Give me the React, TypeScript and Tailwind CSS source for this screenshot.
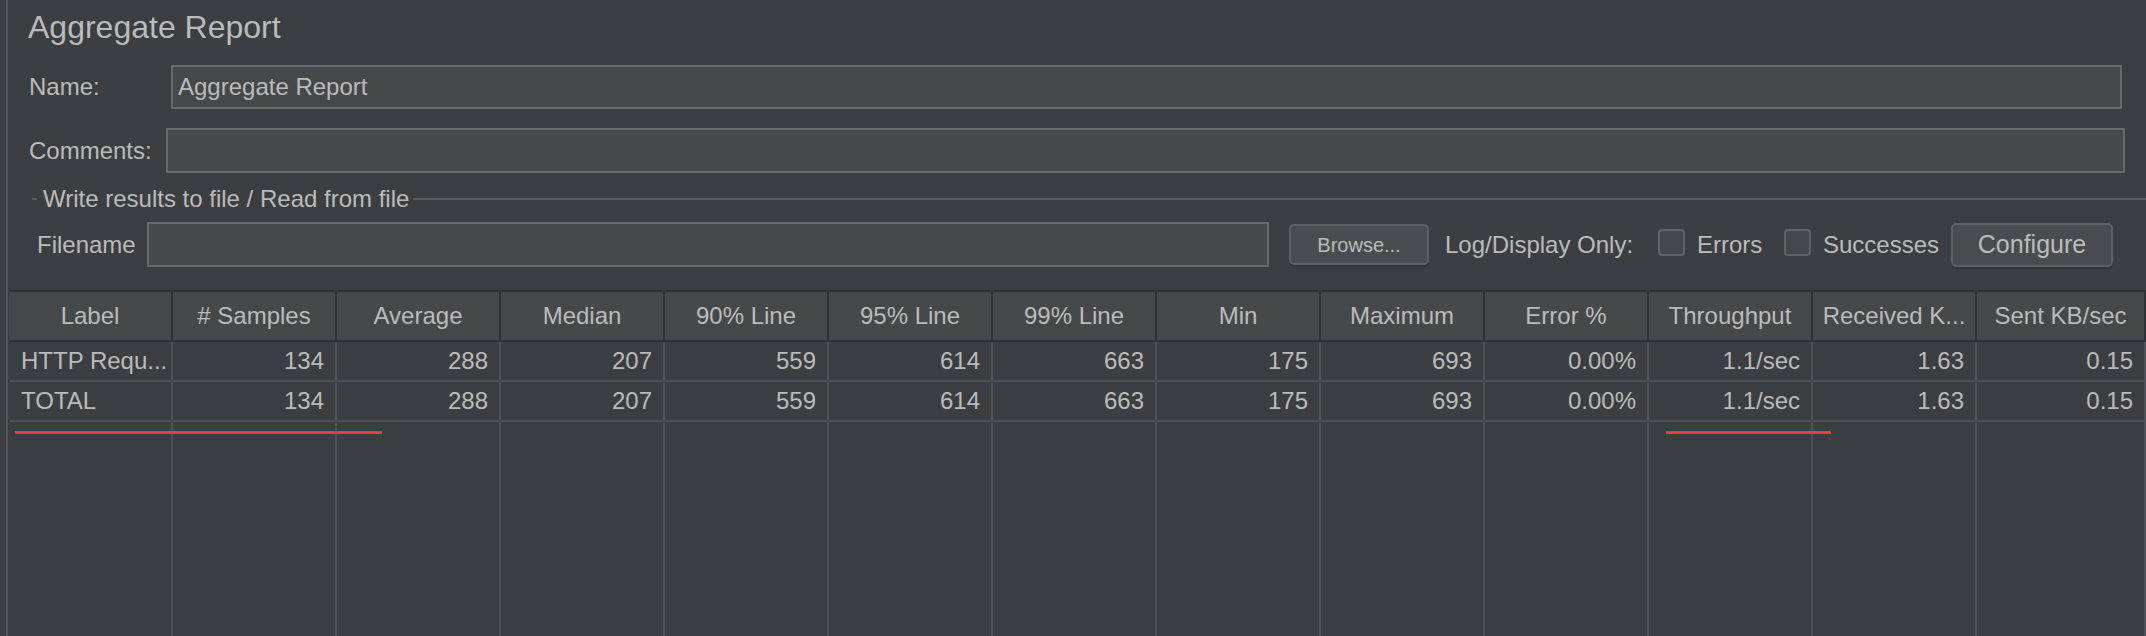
import React from "react";

const columns = [
  "Label",
  "# Samples",
  "Average",
  "Median",
  "90% Line",
  "95% Line",
  "99% Line",
  "Min",
  "Maximum",
  "Error %",
  "Throughput",
  "Received K...",
  "Sent KB/sec",
];

const rows = [
  ["HTTP Requ...", "134", "288", "207", "559", "614", "663", "175", "693", "0.00%", "1.1/sec", "1.63", "0.15"],
  ["TOTAL", "134", "288", "207", "559", "614", "663", "175", "693", "0.00%", "1.1/sec", "1.63", "0.15"],
];

const gridCols = "grid grid-cols-[repeat(12,164px)_1fr]";

function Checkbox() {
  return <div className="h-[27px] w-[27px] shrink-0 rounded-[4px] border-2 border-[#5f6365] bg-[#43494a]" />;
}

export default function App() {
  return (
    <div className="relative h-[636px] w-[2146px] overflow-hidden bg-[#3c3f41] font-['Liberation_Sans',Arial,sans-serif] text-[24px] text-[#bbbbbb]">
      <div className="ml-[6px] flex h-full flex-col border-l-2 border-[#535557]">
        {/* title */}
        <div className="mt-[11px] pl-[20px] text-[32px] leading-[32px]">Aggregate Report</div>

        {/* name */}
        <div className="mt-[22px] flex items-center pl-[21px] pr-[24px]">
          <div className="w-[142px] shrink-0">Name:</div>
          <div className="flex h-[44px] flex-1 items-center border-2 border-[#67696b] bg-[#45494a] pl-[5px]">
            Aggregate Report
          </div>
        </div>

        {/* comments */}
        <div className="mt-[19px] flex items-center pl-[21px] pr-[21px]">
          <div className="w-[137px] shrink-0">Comments:</div>
          <div className="h-[45px] flex-1 border-2 border-[#67696b] bg-[#45494a]" />
        </div>

        {/* titled border */}
        <div className="mt-[13px] flex h-[26px] items-center leading-[26px]">
          <div className="ml-[24px] h-[2px] w-[5px] bg-[#595c5e]" />
          <div className="ml-[6px]">Write results to file / Read from file</div>
          <div className="ml-[4px] h-[2px] flex-1 bg-[#595c5e]" />
        </div>

        {/* filename */}
        <div className="mt-[10px] flex h-[45px] items-center pl-[29px]">
          <div className="w-[110px] shrink-0">Filename</div>
          <div className="h-[45px] w-[1122px] shrink-0 border-2 border-[#67696b] bg-[#45494a]" />
          <button className="ml-[20px] flex h-[41px] w-[140px] shrink-0 items-center justify-center rounded-[5px] border-2 border-[#5e6163] bg-[#494d4f] text-[20px] text-[#bbbbbb] shadow-[0_2px_0_#323436]">
            Browse...
          </button>
          <div className="ml-[16px] w-[213px] shrink-0">Log/Display Only:</div>
          <div className="mb-[5px]">
            <Checkbox />
          </div>
          <div className="ml-[12px] w-[87px] shrink-0">Errors</div>
          <div className="mb-[5px]">
            <Checkbox />
          </div>
          <div className="ml-[12px] w-[128px] shrink-0">Successes</div>
          <button className="flex h-[44px] w-[162px] shrink-0 items-center justify-center rounded-[5px] border-2 border-[#5e6163] bg-[#494d4f] text-[25px] text-[#bbbbbb] shadow-[0_2px_0_#323436]">
            Configure
          </button>
        </div>

        {/* table */}
        <div className="ml-px mt-[23px] flex flex-1 flex-col border-t-2 border-[#2f3133]">
          <div className={gridCols}>
            {columns.map((c) => (
              <div
                key={c}
                className="flex h-[50px] items-center justify-center border-r-2 border-b-2 border-[#2f3133] bg-[#45494a] whitespace-nowrap"
              >
                {c}
              </div>
            ))}
          </div>
          {rows.map((r, i) => (
            <div key={i} className={gridCols}>
              {r.map((v, j) => (
                <div
                  key={j}
                  className={
                    j === 0
                      ? "flex h-[40px] items-center border-r-2 border-b-2 border-[#4f5254] pl-[12px] whitespace-nowrap"
                      : "flex h-[40px] items-center justify-end border-r-2 border-b-2 border-[#4f5254] pr-[11px] whitespace-nowrap"
                  }
                >
                  {v}
                </div>
              ))}
            </div>
          ))}
          <div className={`${gridCols} flex-1`}>
            {columns.map((c) => (
              <div key={c} className="border-r-2 border-[#4f5254]" />
            ))}
          </div>
        </div>
      </div>

      {/* annotation underlines */}
      <div className="absolute left-[15px] top-[431px] h-[3px] w-[367px] bg-[#e8432a]" />
      <div className="absolute left-[1666px] top-[431px] h-[3px] w-[165px] bg-[#e8432a]" />
    </div>
  );
}
